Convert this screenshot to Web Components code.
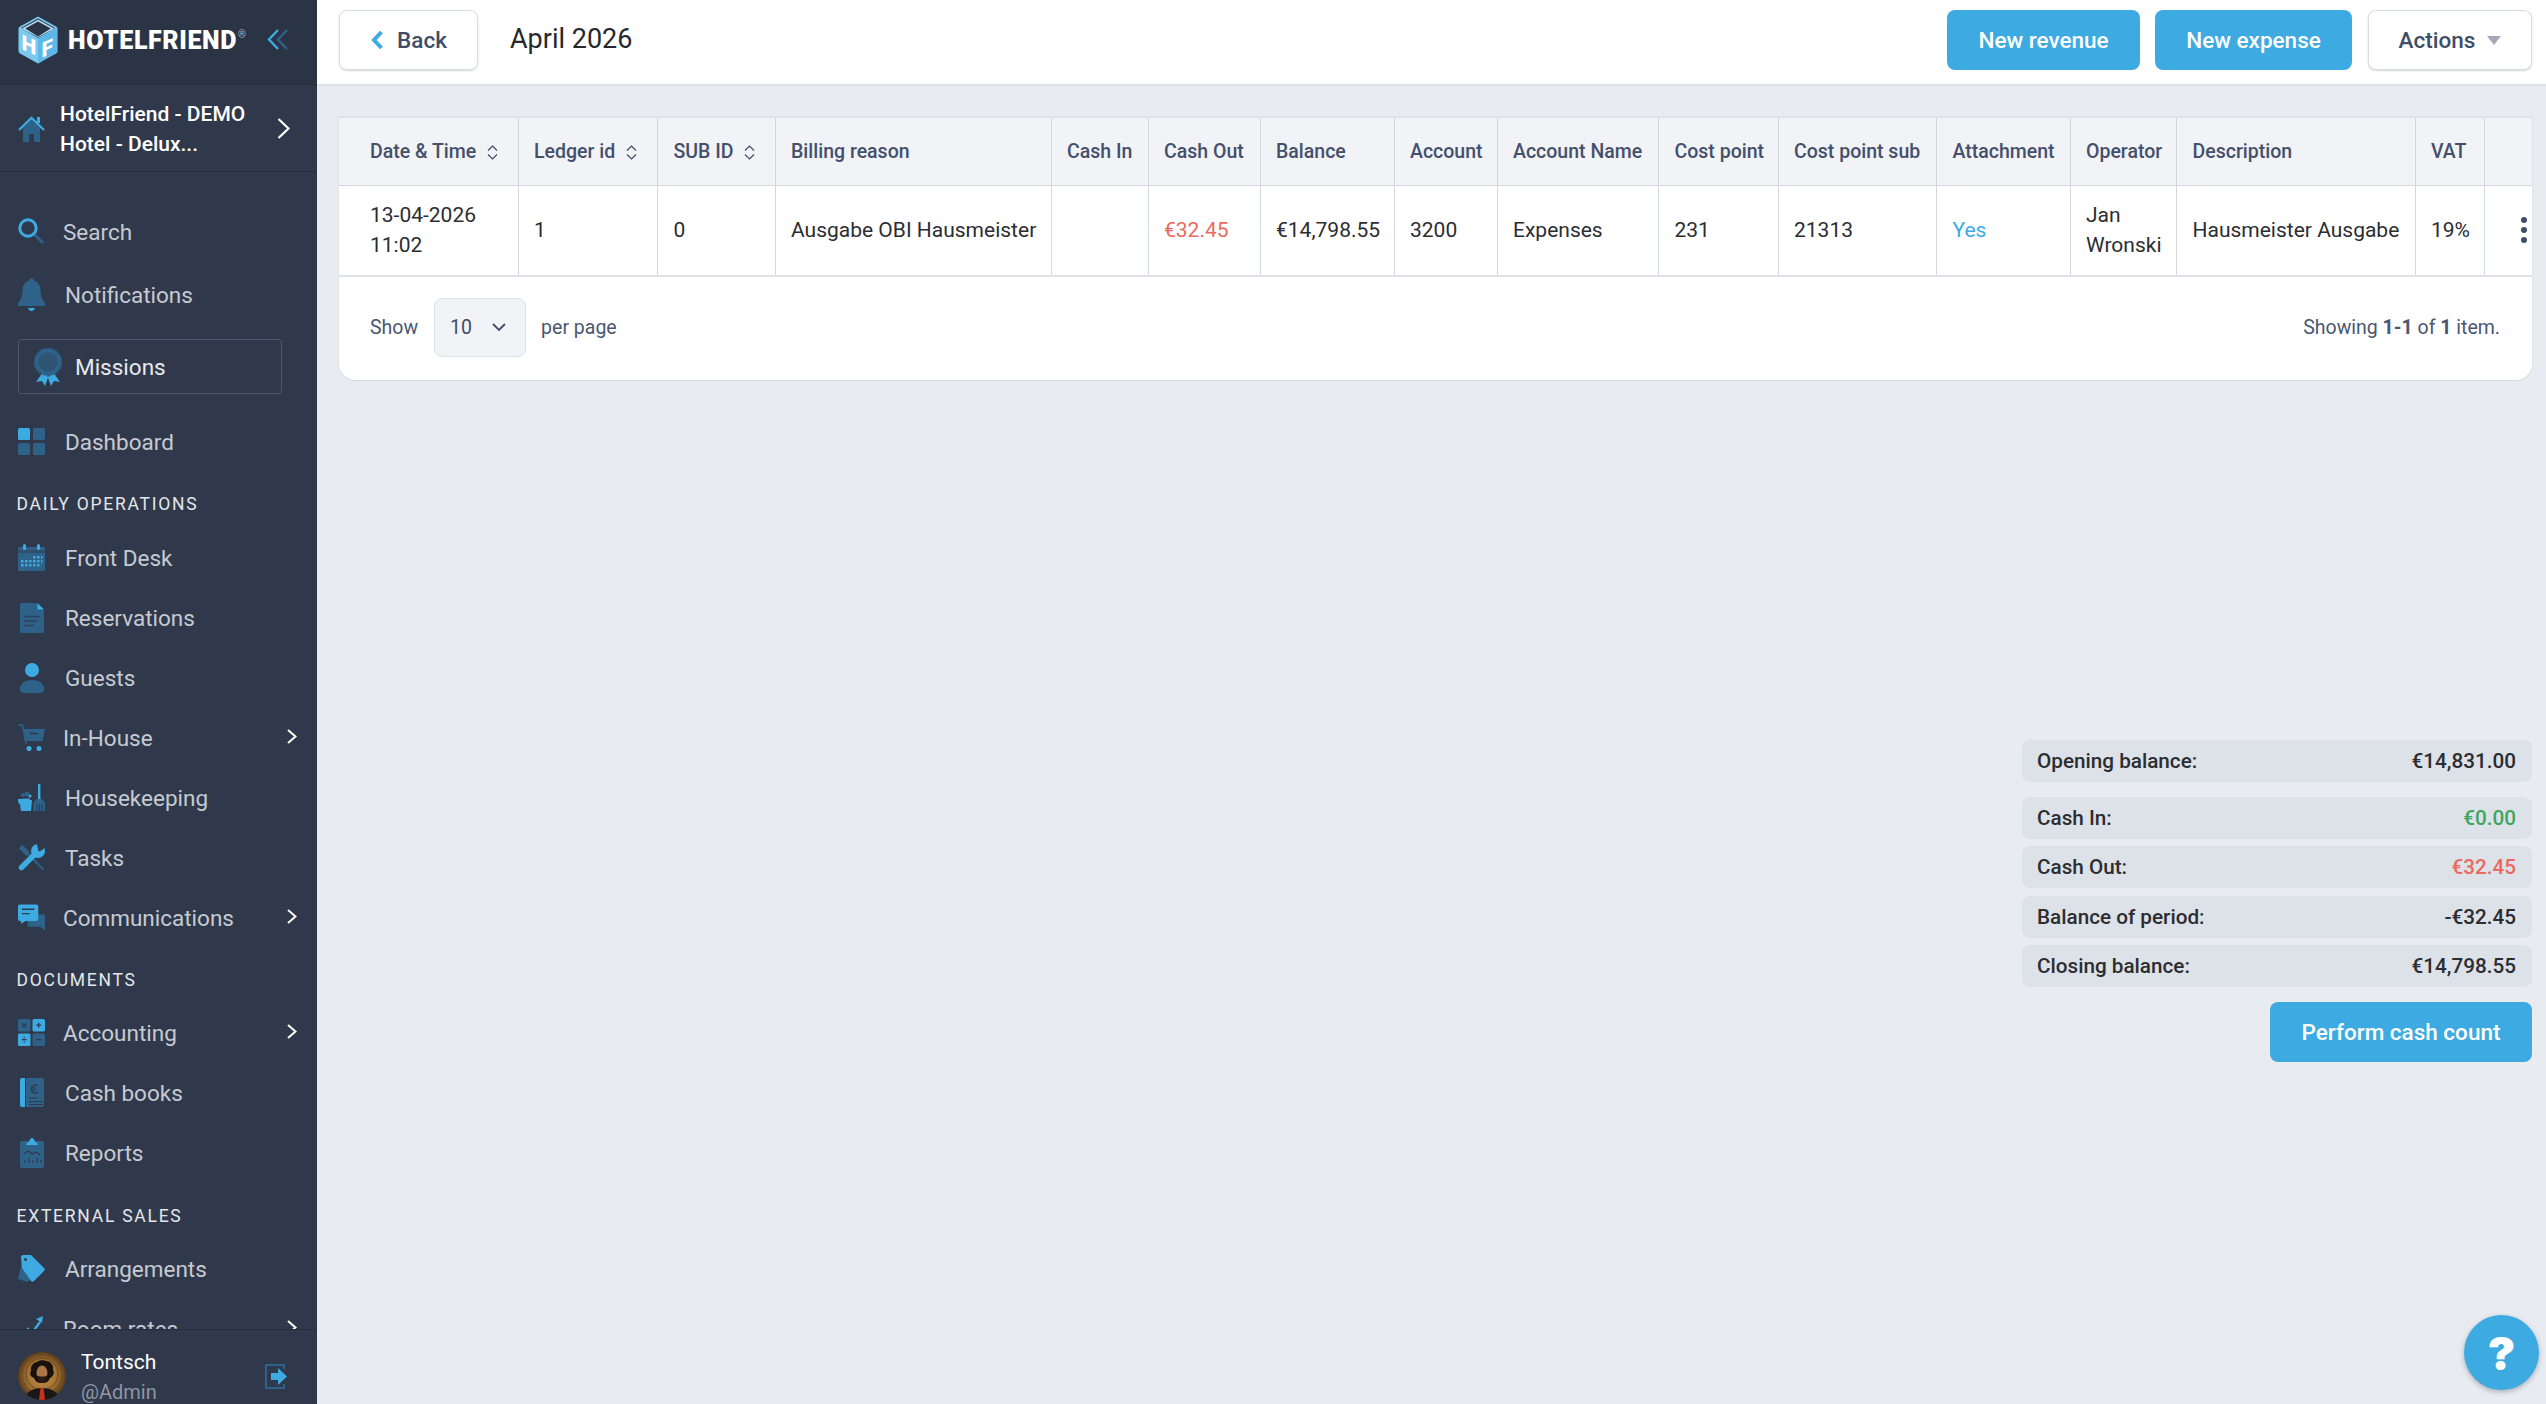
<!DOCTYPE html>
<html>
<head>
<meta charset="utf-8">
<title>HotelFriend - Cash book</title>
<style>
  html, body { margin: 0; height: 100%; }
  body { font-family: Roboto, "Liberation Sans", sans-serif; background: #e8ebf0; overflow: hidden; }
  svg { display: block; }
</style>
</head>
<body>

<hf-app>
  <hf-sidebar slot="sidebar">
    <hf-nav-item label="Search" tight style="margin-top:30px">
      <svg slot="icon" width="27" height="27" viewBox="0 0 27 27"><path d="M16 16l9 9" stroke="#2e6288" stroke-width="3"/><circle cx="10" cy="10" r="8.2" fill="none" stroke="#3dabe2" stroke-width="3"/></svg>
    </hf-nav-item>
    <hf-nav-item label="Notifications" style="margin-top:3px">
      <svg slot="icon" width="27" height="35" viewBox="0 0 27 35"><path d="M13.5 1c1.4 0 2.3 1 2.3 2.5C20.5 5 22.5 9 22.500 14c0 5 1.500 8 4.500 12.500V29H0v-2.500C3 22 4.500 19 4.500 14c0-5 2-9 6.700-10.500C11.200 2 12.100 1 13.500 1z" fill="#2e6288"/><path d="M10 31h7c-.5 2-2 3-3.500 3S10.500 33 10 31z" fill="#3dabe2"/></svg>
    </hf-nav-item>
    <hf-missions style="margin-top:14px">Missions</hf-missions>
    <hf-nav-item label="Dashboard" style="margin-top:18px">
      <svg slot="icon" width="27" height="27" viewBox="0 0 27 27"><rect width="12" height="12" rx="1.5" fill="#3dabe2"/><rect x="15" width="12" height="12" rx="1.5" fill="#2e6288"/><rect y="15" width="12" height="12" rx="1.5" fill="#2e6288"/><rect x="15" y="15" width="12" height="12" rx="1.5" fill="#2e6288"/></svg>
    </hf-nav-item>

    <hf-nav-section style="margin-top:16px;margin-bottom:8px">Daily operations</hf-nav-section>
    <hf-nav-item label="Front Desk">
      <svg slot="icon" width="27" height="27" viewBox="0 0 27 27"><rect y="3" width="27" height="24" rx="1.5" fill="#2e6288"/><rect y="6" width="27" height="3" fill="#30394b" opacity=".45"/><rect x="5" width="3" height="6" rx="1.5" fill="#3dabe2"/><rect x="19" width="3" height="6" rx="1.5" fill="#3dabe2"/><path d="M15 12h2.500v2.500H15zM19 12h2.500v2.500H19zM23 12h1.500v2.500H23zM3 16h2.500v2.500H3zM7 16h2.500v2.500H7zM11 16h2.500v2.500H11zM15 16h2.500v2.500H15zM19 16h2.500v2.500H19zM23 16h1.500v2.500H23zM3 20h2.500v2.500H3zM7 20h2.500v2.500H7zM11 20h2.500v2.500H11zM15 20h2.500v2.500H15zM19 20h2.500v2.500H19z" fill="#3dabe2"/></svg>
    </hf-nav-item>
    <hf-nav-item label="Reservations">
      <svg slot="icon" width="27" height="30" viewBox="0 0 27 30"><path d="M3.500 0h15L26 8v20a2 2 0 0 1-2 2H4a2 2 0 0 1-2-2V2a2 2 0 0 1 1.500-2z" fill="#2e6288"/><path d="M19.500 0L26 6.500h-6.500z" fill="#3dabe2"/><path d="M6 13.500h16M6 18h13M6 22.500h10" stroke="#30394b" stroke-width="1.4" opacity=".8"/></svg>
    </hf-nav-item>
    <hf-nav-item label="Guests">
      <svg slot="icon" width="27" height="30" viewBox="0 0 27 30"><circle cx="14" cy="7" r="7" fill="#3dabe2"/><path d="M2 25.500C2 20 8 17 14 17s12 3 12 8.500c0 3-1.500 4.500-4 4.500H6c-2.500 0-4-1.500-4-4.500z" fill="#2e6288"/></svg>
    </hf-nav-item>
    <hf-nav-item label="In-House" tight arrow>
      <svg slot="icon" width="27" height="27" viewBox="0 0 27 27"><path d="M0 1h4.500L8 20" fill="none" stroke="#2e6288" stroke-width="1.6"/><path d="M5.500 5H27l-2.500 12H8z" fill="#2e6288"/><path d="M12 9.500h8" stroke="#30394b" stroke-width="1.6"/><circle cx="11" cy="24.500" r="2.5" fill="#3dabe2"/><circle cx="21" cy="24.500" r="2.5" fill="#3dabe2"/></svg>
    </hf-nav-item>
    <hf-nav-item label="Housekeeping">
      <svg slot="icon" width="27" height="27" viewBox="0 0 27 27"><circle cx="5" cy="11" r="2" fill="#2e6288"/><circle cx="9" cy="10" r="2.4" fill="#2e6288"/><circle cx="12" cy="12" r="1.6" fill="#3dabe2"/><path d="M0 15l12-.5-.5 1.500H14L13 27H3l-1-7C.5 20 0 18 0 15z" fill="#3dabe2"/><rect x="20" width="2.4" height="15" fill="#3dabe2"/><path d="M18.500 15h5.500l3 4v8H15.500v-8z" fill="#2e6288"/><path d="M19 20v7M21.500 20v7M24 20v7" stroke="#30394b" stroke-width=".9"/></svg>
    </hf-nav-item>
    <hf-nav-item label="Tasks">
      <svg slot="icon" width="27" height="27" viewBox="0 0 27 27"><path d="M2.500 2.500L10 10" stroke="#2e6288" stroke-width="5"/><path d="M9 9l16.500 16.500" stroke="#2e6288" stroke-width="2"/><path d="M3.500 23.500l14-14" stroke="#3dabe2" stroke-width="5.500" stroke-linecap="round"/><circle cx="20" cy="7" r="7" fill="#3dabe2"/><path d="M20.500 7.500L19 0h8.500v6z" fill="#30394b"/><path d="M27 4c0 5-3 9-7 9l1-5z" fill="#3dabe2"/></svg>
    </hf-nav-item>
    <hf-nav-item label="Communications" tight arrow>
      <svg slot="icon" width="28" height="27" viewBox="0 0 28 27"><path d="M10 10h16a2 2 0 0 1 2 2v15l-5-4H10z" fill="#2e6288"/><path d="M2 0h17a2 2 0 0 1 2 2v13a2 2 0 0 1-2 2H8l-5 3v-3H2a2 2 0 0 1-2-2V2a2 2 0 0 1 2-2z" fill="#3dabe2"/><path d="M4 5h13M4 9.500h8" stroke="#30394b" stroke-width="1.5"/></svg>
    </hf-nav-item>

    <hf-nav-section style="margin-top:16px;margin-bottom:7px">Documents</hf-nav-section>
    <hf-nav-item label="Accounting" tight arrow>
      <svg slot="icon" width="27" height="27" viewBox="0 0 27 27"><rect width="12.500" height="12.500" rx="1.5" fill="#2e6288"/><rect x="14.500" width="12.500" height="12.500" rx="1.5" fill="#3dabe2"/><rect y="14.500" width="12.500" height="12.500" rx="1.5" fill="#3dabe2"/><rect x="14.500" y="14.500" width="12.500" height="12.500" rx="1.5" fill="#2e6288"/><path d="M4.500 4.500l3.500 3.500M8 4.500L4.500 8M20.700 3.700v5M18.200 6.200h5M3.700 20.700h5M18.200 20.700h5" stroke="#30394b" stroke-width="1.3"/><circle cx="6.200" cy="18.500" r=".8" fill="#30394b"/><circle cx="6.200" cy="23" r=".8" fill="#30394b"/></svg>
    </hf-nav-item>
    <hf-nav-item label="Cash books">
      <svg slot="icon" width="27" height="29" viewBox="0 0 27 29"><path d="M4 0h3v29H4a2 2 0 0 1-2-2V2a2 2 0 0 1 2-2z" fill="#3dabe2"/><path d="M8 0h16a2 2 0 0 1 2 2v25a2 2 0 0 1-2 2H8z" fill="#2e6288"/><path d="M20 8a4 4 0 1 0 0 6M13 10h5M13 12h5" fill="none" stroke="#30394b" stroke-width="1.2"/><path d="M11 20h8M11 23.500h14M11 26.500h14" stroke="#30394b" stroke-width="1"/></svg>
    </hf-nav-item>
    <hf-nav-item label="Reports">
      <svg slot="icon" width="27" height="30" viewBox="0 0 27 30"><rect x="2" y="3" width="24" height="27" rx="2.5" fill="#2e6288"/><path d="M8 7c0-2 2-3 3-3 .5-2 1.500-4 3-4s2.500 2 3 4c1 0 3 1 3 3z" fill="#3dabe2"/><path d="M6 16l4-3 4 3 4-2 4 3" fill="none" stroke="#30394b" stroke-width="1.2"/><path d="M7 25v-3M11 25v-5M15 25v-3M19 25v-5M23 25v-3" stroke="#30394b" stroke-width="1.2"/></svg>
    </hf-nav-item>

    <hf-nav-section style="margin-top:17px;margin-bottom:7px">External sales</hf-nav-section>
    <hf-nav-item label="Arrangements">
      <svg slot="icon" width="27" height="27" viewBox="0 0 27 27"><path d="M4 7L0 24l9 3 5-3z" fill="#2e6288"/><path d="M3 2c0-1 1-2 2-2h8l13 13c1 1 1 2 0 3L16 26c-1 1-2 1-3 0L4 13z" fill="#3dabe2"/><circle cx="7.500" cy="4.500" r="1.5" fill="#30394b"/></svg>
    </hf-nav-item>
    <hf-nav-item label="Room rates" tight arrow>
      <svg slot="icon" width="27" height="27" viewBox="0 0 27 27"><path d="M1 25L10 14l4 4 8-11" fill="none" stroke="#3dabe2" stroke-width="2.4"/><path d="M18 4l7-3-1 7z" fill="#3dabe2"/><rect x="18" y="17" width="9" height="5" rx="1" fill="#2e6288"/></svg>
    </hf-nav-item>
  </hf-sidebar>

  <hf-topbar slot="topbar" heading="April 2026">
    <hf-button kind="primary" style="width:193px">New revenue</hf-button>
    <hf-button kind="primary" style="width:197px;margin-left:15px">New expense</hf-button>
    <hf-button kind="plain" caret style="width:164px;margin-left:16px">Actions</hf-button>
  </hf-topbar>

  <hf-ledger-card></hf-ledger-card>

  <hf-summary>
    <hf-summary-row label="Opening balance:" value="€14,831.00" style="margin-bottom:15px"></hf-summary-row>
    <hf-summary-row label="Cash In:" value="€0.00" tone="green" style="margin-bottom:7px"></hf-summary-row>
    <hf-summary-row label="Cash Out:" value="€32.45" tone="red" style="margin-bottom:8px"></hf-summary-row>
    <hf-summary-row label="Balance of period:" value="-€32.45" style="margin-bottom:7px"></hf-summary-row>
    <hf-summary-row label="Closing balance:" value="€14,798.55" style="margin-bottom:15px"></hf-summary-row>
    <hf-button kind="primary" style="width:262px;align-self:flex-end">Perform cash count</hf-button>
  </hf-summary>

  <hf-help></hf-help>
</hf-app>

<script>
  class HfApp extends HTMLElement {
    constructor() {
      super();
      this.attachShadow({ mode: 'open' });
      this.shadowRoot.innerHTML = `
        <style>
          :host { display: flex; width: 100vw; height: 100vh; position: relative; overflow: hidden; }
          .main { flex: 1; min-width: 0; display: flex; flex-direction: column; }
          .content { flex: 1; display: flex; flex-direction: column; padding: 30px 14px 0 22px; }
        </style>
        <slot name="sidebar"></slot>
        <div class="main">
          <slot name="topbar"></slot>
          <div class="content"><slot></slot></div>
        </div>
      `;
    }
  }

  class HfSidebar extends HTMLElement {
    constructor() {
      super();
      this.attachShadow({ mode: 'open' });
      this.shadowRoot.innerHTML = `
        <style>
          :host { display: flex; flex-direction: column; flex: none; width: 317px; height: 100vh; background: #30394b; font-family: Roboto, "Liberation Sans", sans-serif; }
          .brand { flex: none; height: 84px; background: #2b3444; border-bottom: 1px solid #262e3d; display: flex; align-items: center; padding-left: 18px; }
          .wordmark { margin: -3px 0 0 10px; color: #fff; font-size: 25px; font-weight: 900; letter-spacing: .6px; line-height: 1; white-space: nowrap; }
          .wordmark sup { font-size: 10px; font-weight: 400; color: #aeb4bf; letter-spacing: 0; vertical-align: 11px; line-height: 0; margin-left: 1px; }
          .collapse { margin-left: auto; margin-right: 29px; margin-top: -5px; }
          .hotel { flex: none; height: 86px; border-bottom: 1px solid #262e3d; display: flex; align-items: center; padding-left: 18px; }
          .hotel-name { margin-left: 15px; color: #fff; font-size: 21px; font-weight: 500; line-height: 30px; width: 205px; padding-top: 1px; }
          .hotel .next { margin-left: 12px; }
          .menu { flex: 1; min-height: 0; overflow: hidden; display: flex; flex-direction: column; }
          .user { flex: none; height: 75px; border-top: 1px solid #262e3d; display: flex; align-items: center; padding: 18px 0 0 18px; box-sizing: border-box; }
          .who { margin: 3px 0 0 15px; }
          .who b { display: block; color: #fff; font-size: 21px; font-weight: 400; line-height: 30px; }
          .who span { display: block; color: #8e96a5; font-size: 20px; line-height: 31px; }
          .logout { margin-left: auto; margin-right: 30px; }
        </style>
        <div class="brand">
          <svg width="40" height="48" viewBox="0 0 40 48" style="margin-top:-5px">
            <path d="M20 .5l18 10c1 .6 1.500 1.300 1.500 2.500v22c0 1.200-.5 1.900-1.500 2.500l-18 10-18-10c-1-.6-1.500-1.300-1.500-2.500V13c0-1.200.5-1.900 1.500-2.500z" fill="#7cc9f0"/>
            <path d="M20 2.500L37 12 20 22 3 12z" fill="#2b3444"/>
            <path d="M20 4.500L34.500 12.500 20 20.500 5.500 12.500z" fill="none" stroke="#b5e2f8" stroke-width="1.5"/>
            <path d="M20 8.500l11 5-11 7-11-7z" fill="#2b3444"/>
            <path d="M20 22l19-10v24l-19 11.500z" fill="#5db7e8"/>
            <text font-family="Roboto, sans-serif" font-weight="900" font-size="21" fill="#fff" transform="translate(3.500 33) skewY(24)">H</text>
            <text font-family="Roboto, sans-serif" font-weight="900" font-size="21" fill="#fff" transform="translate(23.500 42) skewY(-24)">F</text>
          </svg>
          <div class="wordmark">HOTELFRIEND<sup>®</sup></div>
          <svg class="collapse" width="21" height="21" viewBox="0 0 21 21" fill="none" stroke-width="2.4"><path d="M20 1L11 10.500 20 20" stroke="#2e6288"/><path d="M11 1L2 10.500 11 20" stroke="#3dabe2"/></svg>
        </div>
        <div class="hotel">
          <svg width="27" height="27" viewBox="0 0 27 27"><path d="M5 13v14h6v-8h5v8h6V13L13.500 5z" fill="#2e6288"/><rect x="19" y="2" width="3" height="6" fill="#3dabe2"/><path d="M1 15L13.500 3 26 15" fill="none" stroke="#3dabe2" stroke-width="2.4"/></svg>
          <div class="hotel-name">HotelFriend - DEMO Hotel - Delux...</div>
          <svg class="next" width="13" height="21" viewBox="0 0 13 21" fill="none" stroke="#fff" stroke-width="2.2"><path d="M1.500 1l10 9.500-10 9.500"/></svg>
        </div>
        <div class="menu"><slot></slot></div>
        <div class="user">
          <svg width="48" height="48" viewBox="0 0 48 48">
            <defs>
              <radialGradient id="halo" cx="50%" cy="50%" r="50%"><stop offset="0" stop-color="#c9964f"/><stop offset=".65" stop-color="#a0702f"/><stop offset="1" stop-color="#5a3b1c"/></radialGradient>
              <clipPath id="round"><circle cx="24" cy="24" r="24"/></clipPath>
            </defs>
            <g clip-path="url(#round)">
              <rect width="48" height="48" fill="url(#halo)"/>
              <circle cx="24" cy="22" r="16" fill="none" stroke="#6e4a22" stroke-width="1"/>
              <circle cx="24" cy="22" r="20" fill="none" stroke="#6e4a22" stroke-width=".8"/>
              <path d="M13 19c-1-5 3-9 6-9 2-2 7-2 9-1 4 0 8 4 7 9 2 3 0 7-3 8-1 3-3 5-8 5s-7-2-8-5c-3-1-5-4-3-7z" fill="#1a110c"/>
              <ellipse cx="24" cy="21" rx="5.5" ry="7.500" fill="#a9774a"/>
              <path d="M18.500 23c1 5 3 8 5.500 8s4.500-3 5.500-8c-2 2-9 2-11 0z" fill="#2a1b12"/>
              <path d="M6 48c1-8 9-12 18-12s17 4 18 12z" fill="#1b1716"/>
              <path d="M22.500 36h3l1.500 12h-6z" fill="#c9301d"/>
            </g>
          </svg>
          <div class="who"><b>Tontsch</b><span>@Admin</span></div>
          <svg class="logout" width="23" height="27" viewBox="0 0 23 27" fill="none"><path d="M20 6V2H2v23h18v-4" stroke="#2e6288" stroke-width="2.2" stroke-linejoin="round"/><path d="M7 10h7V5l9 8.500-9 8.500v-5H7z" fill="#3dabe2"/></svg>
        </div>
      `;
    }
  }

  class HfNavItem extends HTMLElement {
    constructor() {
      super();
      this.attachShadow({ mode: 'open' });
    }

    connectedCallback() {
      const arrow = this.hasAttribute('arrow');
      const tight = this.hasAttribute('tight');
      this.shadowRoot.innerHTML = `
        <style>
          :host { display: flex; flex: none; height: 60px; align-items: center; padding-left: 18px; color: #c6cad2; font-size: 22.5px; }
          .icon { width: 27px; height: 36px; display: flex; align-items: center; justify-content: center; flex: none; margin-top: -1px; }
          .label { margin-left: ${tight ? 18 : 20}px; white-space: nowrap; }
          .arrow { margin-left: auto; margin-right: 20px; margin-top: -3px; }
        </style>
        <span class="icon"><slot name="icon"></slot></span>
        <span class="label">${this.getAttribute('label')}</span>
        ${arrow ? '<svg class="arrow" width="10" height="15" viewBox="0 0 10 15" fill="none" stroke="#fff" stroke-width="2"><path d="M1 1l7.500 6.500L1 14"/></svg>' : ''}
      `;
    }
  }

  class HfNavSection extends HTMLElement {
    constructor() {
      super();
      this.attachShadow({ mode: 'open' });
      this.shadowRoot.innerHTML = `
        <style>
          :host { display: block; flex: none; height: 32px; line-height: 32px; padding-left: 16.5px; color: #e3e6ea; font-size: 17.5px; letter-spacing: 1.75px; text-transform: uppercase; }
        </style>
        <slot></slot>
      `;
    }
  }

  class HfMissions extends HTMLElement {
    constructor() {
      super();
      this.attachShadow({ mode: 'open' });
      this.shadowRoot.innerHTML = `
        <style>
          :host { display: flex; flex: none; align-items: center; box-sizing: border-box; width: 264px; height: 55px; margin-left: 18px; border: 1px solid #4a5670; border-radius: 3px; padding-left: 15px; color: #e6e8ec; font-size: 22.5px; }
          span { margin-left: 13px; }
        </style>
        <svg width="28" height="38" viewBox="0 0 28 38">
          <path d="M9 24L2 34l6-1 3 5 4-11zM19 24l7 10-6-1-3 5-4-11z" fill="#3dabe2"/>
          <circle cx="14" cy="14" r="13.5" fill="#2e6288" stroke="#2e6288" stroke-dasharray="1.5 1.5" stroke-width="1.5"/>
          <circle cx="14" cy="14" r="9.500" fill="#30394b" opacity=".35"/>
        </svg>
        <span><slot></slot></span>
      `;
    }
  }

  class HfButton extends HTMLElement {
    constructor() {
      super();
      this.attachShadow({ mode: 'open' });
    }

    connectedCallback() {
      const primary = this.getAttribute('kind') === 'primary';
      const caret = this.hasAttribute('caret');
      this.shadowRoot.innerHTML = `
        <style>
          :host { display: inline-flex; flex: none; align-items: center; justify-content: center; box-sizing: border-box; height: 60px; border-radius: 8px; font-size: 22.5px; font-weight: 500; white-space: nowrap;
            ${primary ? 'background: #3dabe2; color: #fff;' : 'background: #fff; color: #3f4d68; border: 1px solid #d9dde4; box-shadow: 0 1px 2px rgba(60,70,90,.22);'} }
          .caret { width: 0; height: 0; margin-left: 12px; border-left: 7px solid transparent; border-right: 7px solid transparent; border-top: 9px solid #a2a9b8; }
        </style>
        <slot></slot>
        ${caret ? '<span class="caret"></span>' : ''}
      `;
    }
  }

  class HfTopbar extends HTMLElement {
    constructor() {
      super();
      this.attachShadow({ mode: 'open' });
    }

    connectedCallback() {
      this.shadowRoot.innerHTML = `
        <style>
          :host { display: flex; flex: none; align-items: center; box-sizing: border-box; height: 86px; background: #fff; border-bottom: 2px solid #dfe2e8; padding: 0 14px 4px 22px; }
          .back { display: flex; align-items: center; justify-content: center; box-sizing: border-box; width: 139px; height: 60px; border: 1px solid #d9dde4; border-radius: 8px; box-shadow: 0 1px 2px rgba(60,70,90,.22); color: #3f4d68; font-size: 22.5px; font-weight: 500; }
          .back svg { margin-right: 13px; }
          h1 { margin: 0 0 2px 32px; font-size: 27px; font-weight: 400; color: #26282c; }
          .actions { margin-left: auto; display: flex; }
        </style>
        <div class="back">
          <svg width="14" height="20" viewBox="0 0 14 20" fill="none" stroke="#3dabe2" stroke-width="4"><path d="M11.500 2L4 10l7.500 8"/></svg>
          Back
        </div>
        <h1>${this.getAttribute('heading')}</h1>
        <div class="actions"><slot></slot></div>
      `;
    }
  }

  const COLUMNS = [
    { title: 'Date & Time', width: 179, sort: true },
    { title: 'Ledger id', width: 139.5, sort: true },
    { title: 'SUB ID', width: 117.5, sort: true },
    { title: 'Billing reason', width: 276 },
    { title: 'Cash In', width: 97 },
    { title: 'Cash Out', width: 112 },
    { title: 'Balance', width: 134 },
    { title: 'Account', width: 103 },
    { title: 'Account Name', width: 161.5 },
    { title: 'Cost point', width: 119.5 },
    { title: 'Cost point sub', width: 158.5 },
    { title: 'Attachment', width: 133.5 },
    { title: 'Operator', width: 106.5 },
    { title: 'Description', width: 238.5 },
    { title: 'VAT', width: 69 },
    { title: '', width: 48 }
  ];

  const ROW = [
    '13-04-2026<br>11:02', '1', '0', 'Ausgabe OBI Hausmeister', '', '<span class="red">€32.45</span>',
    '€14,798.55', '3200', 'Expenses', '231', '21313', '<span class="blue">Yes</span>',
    'Jan<br>Wronski', 'Hausmeister Ausgabe', '19%', ''
  ];

  class HfLedgerCard extends HTMLElement {
    constructor() {
      super();
      this.attachShadow({ mode: 'open' });
    }

    connectedCallback() {
      const sortIcon = '<svg class="sort" width="11" height="15" viewBox="0 0 11 15" fill="none" stroke="#3f4d68" stroke-width="1.2"><path d="M1 5.500L5.500 1 10 5.500M1 9.500L5.500 14 10 9.500"/></svg>';
      this.shadowRoot.innerHTML = `
        <style>
          :host { display: block; flex: none; background: #fff; border-radius: 0 0 16px 16px; box-shadow: 0 1px 0 #d5d9e0, -1px 0 0 #e0e3e8, 1px 0 0 #e0e3e8; font-size: 21px; }
          table { border-collapse: collapse; table-layout: fixed; width: 2193px; }
          th, td { box-sizing: border-box; padding: 0 0 0 15.5px; text-align: left; border: 1px solid #d3d8e0; border-top: 0; }
          th:first-child, td:first-child { padding-left: 31px; border-left: 0; }
          th:last-child, td:last-child { border-right: 0; }
          th { height: 68px; background: #f1f3f7; color: #44506b; font-size: 19.5px; font-weight: 500; white-space: nowrap; border-top: 2px solid #dfe2e8; }
          td { height: 91px; color: #2b2d31; line-height: 30px; font-size: 21px; border-bottom: 2px solid #dfe2e8; }
          .sort { display: inline-block; margin-left: 11px; vertical-align: -2px; }
          .red { color: #ea6a5e; }
          .blue { color: #3dabe2; }
          .dots { display: flex; flex-direction: column; gap: 4px; align-items: center; width: 6px; margin-left: 21px; }
          .dots i { width: 6px; height: 6px; border-radius: 50%; background: #3f4d68; }
          .foot { height: 103px; box-sizing: border-box; display: flex; align-items: center; padding: 0 32px 2px 31px; color: #4a5772; font-size: 19.5px; }
          .select { display: flex; align-items: center; box-sizing: border-box; width: 92px; height: 59px; margin: 0 15px 0 16px; padding-left: 15px; background: #f1f3f7; border: 1px solid #dde1e8; border-radius: 8px; color: #3f4d68; }
          .select svg { margin-left: 20px; }
          .showing { margin-left: auto; }
          .showing b { font-weight: 700; }
        </style>
        <table>
          <colgroup>${COLUMNS.map(c => `<col style="width:${c.width}px">`).join('')}</colgroup>
          <tr>${COLUMNS.map(c => `<th>${c.title.replace('&', '&amp;')}${c.sort ? sortIcon : ''}</th>`).join('')}</tr>
          <tr>${ROW.map((cell, i) => `<td>${i === ROW.length - 1 ? '<div class="dots"><i></i><i></i><i></i></div>' : cell}</td>`).join('')}</tr>
        </table>
        <div class="foot">
          <span>Show</span>
          <div class="select">10
            <svg width="14" height="9" viewBox="0 0 14 9" fill="none" stroke="#3f4d68" stroke-width="1.8"><path d="M1 1l6 6 6-6"/></svg>
          </div>
          <span>per page</span>
          <span class="showing">Showing <b>1-1</b> of <b>1</b> item.</span>
        </div>
      `;
    }
  }

  class HfSummary extends HTMLElement {
    constructor() {
      super();
      this.attachShadow({ mode: 'open' });
      this.shadowRoot.innerHTML = `
        <style>
          :host { display: flex; flex-direction: column; flex: none; align-self: flex-end; width: 510px; margin-top: 360px; }
        </style>
        <slot></slot>
      `;
    }
  }

  class HfSummaryRow extends HTMLElement {
    constructor() {
      super();
      this.attachShadow({ mode: 'open' });
    }

    connectedCallback() {
      const colors = { green: '#3fa65f', red: '#ea6a5e' };
      this.shadowRoot.innerHTML = `
        <style>
          :host { display: flex; flex: none; justify-content: space-between; align-items: center; box-sizing: border-box; height: 42px; padding: 0 16px 0 15px; background: #dde1e8; border-radius: 8px; color: #2b2d31; font-size: 20.7px; font-weight: 500; }
          .value { color: ${colors[this.getAttribute('tone')] || 'inherit'}; }
        </style>
        <span>${this.getAttribute('label')}</span>
        <span class="value">${this.getAttribute('value')}</span>
      `;
    }
  }

  class HfHelp extends HTMLElement {
    constructor() {
      super();
      this.attachShadow({ mode: 'open' });
      this.shadowRoot.innerHTML = `
        <style>
          :host { position: absolute; right: 7px; bottom: 14px; display: flex; align-items: center; justify-content: center; width: 75px; height: 75px; border-radius: 50%; background: #3dabe2; box-shadow: 0 2px 5px rgba(50,60,80,.35); color: #fff; font-family: Inter, Roboto, sans-serif; font-size: 46px; font-weight: 900; }
        </style>
        ?
      `;
    }
  }

  customElements.define('hf-app', HfApp);
  customElements.define('hf-sidebar', HfSidebar);
  customElements.define('hf-nav-item', HfNavItem);
  customElements.define('hf-nav-section', HfNavSection);
  customElements.define('hf-missions', HfMissions);
  customElements.define('hf-button', HfButton);
  customElements.define('hf-topbar', HfTopbar);
  customElements.define('hf-ledger-card', HfLedgerCard);
  customElements.define('hf-summary', HfSummary);
  customElements.define('hf-summary-row', HfSummaryRow);
  customElements.define('hf-help', HfHelp);
</script>
</body>
</html>
